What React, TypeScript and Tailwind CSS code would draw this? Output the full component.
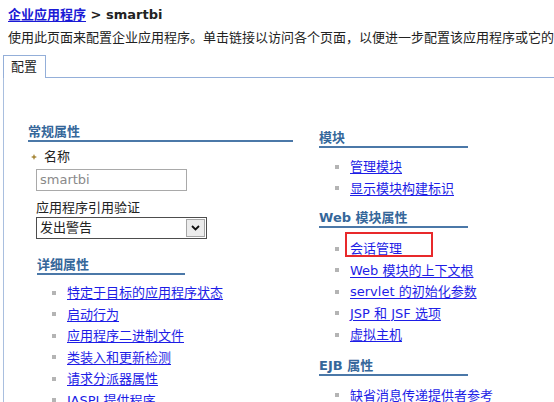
import React from "react";

const linkCls = "text-[#1d1de6] underline underline-offset-[2px] decoration-[1px]";

function Item({ children, boxed }: { children: React.ReactNode; boxed?: boolean }) {
  return (
    <li className="relative flex items-center h-[21.5px] whitespace-nowrap">
      <span className="w-[4px] h-[4px] bg-[#b4b4b4] mr-[11px] shrink-0" />
      <a className={linkCls}>{children}</a>
      {boxed && (
        <span className="absolute left-[10px] top-[-6px] w-[88px] h-[25px] border-2 border-[#e8292b]" />
      )}
    </li>
  );
}

function Heading({ children }: { children: React.ReactNode }) {
  return (
    <div className="h-[18px] leading-[16px] font-bold text-[#35679a] border-b-2 border-[#4b78a8] whitespace-nowrap">
      {children}
    </div>
  );
}

export default function App() {
  return (
    <div className="w-[554px] h-[402px] overflow-hidden bg-white text-[13px] text-[#222] font-['DejaVu_Sans','Noto_Sans_CJK_SC',sans-serif]">
      <div className="pl-2 pt-[7px] h-[23px] leading-[16px] font-bold whitespace-nowrap">
        <a className="text-[#1a1ad6] underline underline-offset-[2px]">企业应用程序</a>
        <span className="text-[#222]"> &gt; smartbi</span>
      </div>
      <div className="pl-2 mt-[7px] h-[16px] leading-[16px] whitespace-nowrap overflow-hidden">
        使用此页面来配置企业应用程序。单击链接以访问各个页面，以便进一步配置该应用程序或它的组件。
      </div>
      <div className="flex mt-[9px] ml-[3px] h-[23px]">
        <div className="w-[43px] h-[23px] border-l border-t border-r border-[#94afd9] pl-[7px] leading-[22px]">
          配置
        </div>
        <div className="flex-1 h-[23px] border-b border-[#94afd9]" />
      </div>
      <div className="ml-[3px] h-[324px] border-l border-[#a9bfdf] pl-[24px] flex gap-[26px]">
        <div className="w-[265px] pt-[46px]">
          <Heading>常规属性</Heading>
          <div className="mt-[7px] h-[16px] leading-[16px] flex items-center">
            <svg width="6" height="6" viewBox="0 0 6 6" className="ml-[3px] mr-[7px]">
              <path d="M3 0 L3.9 2.1 L6 3 L3.9 3.9 L3 6 L2.1 3.9 L0 3 L2.1 2.1 Z" fill="#a8893c" />
            </svg>
            <span>名称</span>
          </div>
          <div className="mt-[4px] ml-[8px] w-[151px] h-[22px] border border-[#a9a9a9] pl-[3px] leading-[20px] text-[#8a8a8a]">
            smartbi
          </div>
          <div className="mt-[9px] ml-[8px] h-[16px] leading-[16px]">应用程序引用验证</div>
          <div className="mt-[1px] ml-[8px] w-[171px] h-[22px] border border-[#4d4d4d] pl-[3px] flex items-center">
            <span className="flex-1 leading-[20px]">发出警告</span>
            <span className="w-[19px] h-[18px] mr-[1px] border border-[#a6a6a6] bg-[#ececec] flex items-center justify-center">
              <svg width="9" height="6" viewBox="0 0 9 6">
                <path d="M1 1 L4.5 4.5 L8 1" stroke="#111" strokeWidth="1.8" fill="none" />
              </svg>
            </span>
          </div>
          <div className="ml-[9px] mt-[18px] w-[148px]">
            <Heading>详细属性</Heading>
          </div>
          <ul className="ml-[9px] mt-[7px] pl-[15px]">
            <Item>特定于目标的应用程序状态</Item>
            <Item>启动行为</Item>
            <Item>应用程序二进制文件</Item>
            <Item>类装入和更新检测</Item>
            <Item>请求分派器属性</Item>
            <Item>JASPI 提供程序</Item>
          </ul>
        </div>
        <div className="w-[149px] pt-[52px]">
          <Heading>模块</Heading>
          <ul className="mt-[8px] pl-[16px]">
            <Item>管理模块</Item>
            <Item>显示模块构建标识</Item>
          </ul>
          <div className="mt-[11px]">
            <Heading>Web 模块属性</Heading>
          </div>
          <ul className="mt-[10px] pl-[16px]">
            <Item boxed>会话管理</Item>
            <Item>Web 模块的上下文根</Item>
            <Item>servlet 的初始化参数</Item>
            <Item>JSP 和 JSF 选项</Item>
            <Item>虚拟主机</Item>
          </ul>
          <div className="mt-[12px]">
            <Heading>EJB 属性</Heading>
          </div>
          <ul className="mt-[9px] pl-[16px]">
            <Item>缺省消息传递提供者参考</Item>
          </ul>
        </div>
      </div>
    </div>
  );
}
